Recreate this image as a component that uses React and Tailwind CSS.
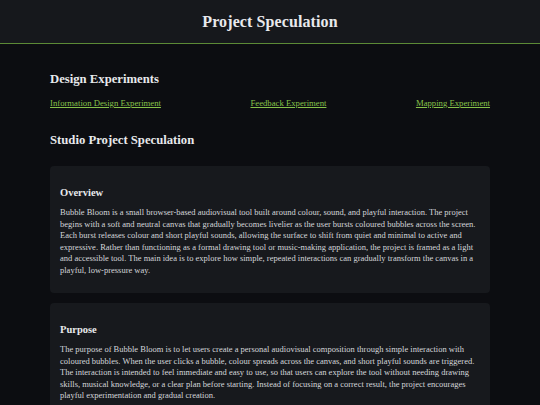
export default function App() {
  const serif = { fontFamily: '"Liberation Serif", "DejaVu Serif", serif' };
  return (
    <div className="min-h-[405px] bg-[#0c0d11] text-[#e5e7eb]" style={serif}>
      <header className="h-[44px] bg-[#16181c] border-b border-[#5c8a36] flex items-center justify-center">
        <h1 className="text-[16px] font-bold text-[#e8e9ec] tracking-[0.1px]">Project Speculation</h1>
      </header>
      <main className="w-[440px] mx-auto pt-[26px]">
        <h2 className="text-[12.7px] font-bold text-[#e8e9ec] leading-[18px]">Design Experiments</h2>
        <div className="flex justify-between mt-[10px] text-[8.7px] leading-[10px]">
          <a href="#" className="text-[#86c24a] underline">Information Design Experiment</a>
          <a href="#" className="text-[#86c24a] underline">Feedback Experiment</a>
          <a href="#" className="text-[#86c24a] underline">Mapping Experiment</a>
        </div>
        <h2 className="text-[12.7px] font-bold text-[#e8e9ec] leading-[18px] mt-[23px]">Studio Project Speculation</h2>
        <section className="mt-[17px] bg-[#17191d] rounded-[4px] px-[10px] pt-[20px] pb-[17px]">
          <h3 className="text-[10.5px] font-bold text-[#e8e9ec] leading-[14px]">Overview</h3>
          <p className="mt-[7px] text-[8.5px] leading-[11.5px] text-[#d4d6da]">
            Bubble Bloom is a small browser-based audiovisual tool built around colour, sound, and playful interaction. The project begins with a soft and neutral canvas that gradually becomes livelier as the user bursts coloured bubbles across the screen. Each burst releases colour and short playful sounds, allowing the surface to shift from quiet and minimal to active and expressive. Rather than functioning as a formal drawing tool or music-making application, the project is framed as a light and accessible tool. The main idea is to explore how simple, repeated interactions can gradually transform the canvas in a playful, low-pressure way.
          </p>
        </section>
        <section className="mt-[10px] bg-[#17191d] rounded-[4px] px-[10px] pt-[20px] pb-[17px]">
          <h3 className="text-[10.5px] font-bold text-[#e8e9ec] leading-[14px]">Purpose</h3>
          <p className="mt-[7px] text-[8.5px] leading-[11.5px] text-[#d4d6da]">
            The purpose of Bubble Bloom is to let users create a personal audiovisual composition through simple interaction with coloured bubbles. When the user clicks a bubble, colour spreads across the canvas, and short playful sounds are triggered. The interaction is intended to feel immediate and easy to use, so that users can explore the tool without needing drawing skills, musical knowledge, or a clear plan before starting. Instead of focusing on a correct result, the project encourages playful experimentation and gradual creation.
          </p>
        </section>
      </main>
    </div>
  );
}
